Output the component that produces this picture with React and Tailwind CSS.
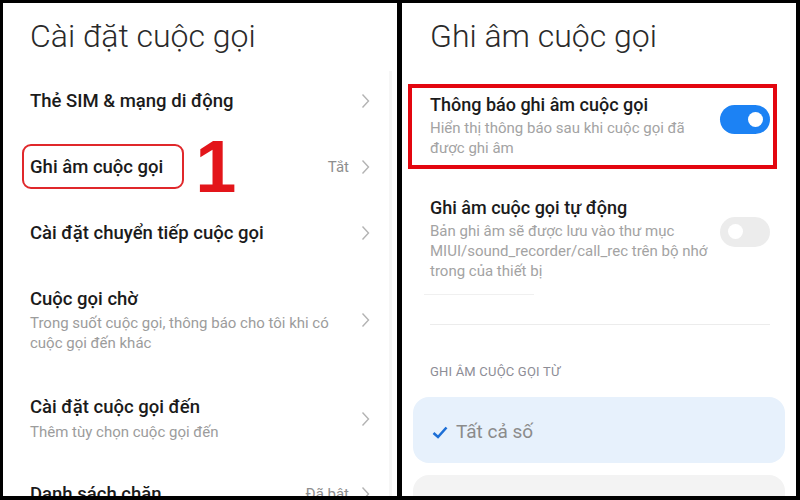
import React from "react";

const font = { fontFamily: "Roboto, 'Noto Sans', sans-serif" };

function Chevron() {
	return (
		<svg width="9" height="16" viewBox="0 0 9 16" className="shrink-0">
			<polyline points="1.5,1.5 7.5,8 1.5,14.5" fill="none" stroke="#b3b3b3" strokeWidth="1.4" />
		</svg>
	);
}

function Toggle({ on }) {
	return on ? (
		<div className="w-[50px] h-[29px] rounded-full bg-[#1c82f4] flex items-center justify-end pr-[7px] shrink-0">
			<div className="w-[15px] h-[15px] rounded-full bg-white" />
		</div>
	) : (
		<div className="w-[50px] h-[30px] rounded-full bg-[#ececec] flex items-center pl-[8px] shrink-0">
			<div className="w-[15px] h-[15px] rounded-full bg-white" />
		</div>
	);
}

function LeftPanel() {
	return (
		<div className="w-[394px] h-full bg-white overflow-hidden relative flex">
			<div className="flex-1 flex flex-col pl-[27px] pr-[19px]">
				<div className="h-[65px] pt-[13px] shrink-0">
					<h1 className="text-[32px] leading-[40px] font-light text-[#2a2a2a]">Cài đặt cuộc gọi</h1>
				</div>
				<div className="h-[66px] shrink-0 flex items-center justify-between">
					<p className="text-[18.5px] leading-[24px] font-medium text-[#1b1b1b]">Thẻ SIM &amp; mạng di động</p>
					<Chevron />
				</div>
				<div className="h-[66px] shrink-0 flex items-center justify-between">
					<div className="flex items-center">
						<span className="relative text-[18.5px] leading-[24px] font-medium text-[#1b1b1b]">
							Ghi âm cuộc gọi
							<span className="absolute -left-[8px] -right-[21px] -top-[11px] -bottom-[10px] border-[2.5px] border-[#e0282b] rounded-[9px]" />
						</span>
						<span className="ml-[32px] text-[74px] leading-none font-bold text-[#e3151a]" style={{ fontFamily: "'Liberation Sans', Arial, sans-serif" }}>1</span>
					</div>
					<div className="flex items-center gap-[12px]">
						<span className="text-[15px] text-[#8e8e8e]">Tắt</span>
						<Chevron />
					</div>
				</div>
				<div className="h-[66px] shrink-0 flex items-center justify-between">
					<p className="text-[18.5px] leading-[24px] font-medium text-[#1b1b1b]">Cài đặt chuyển tiếp cuộc gọi</p>
					<Chevron />
				</div>
				<div className="pt-[21px] pb-[18px] shrink-0 flex items-center justify-between">
					<div>
						<p className="text-[18.5px] leading-[24px] font-medium text-[#1b1b1b]">Cuộc gọi chờ</p>
						<p className="text-[15px] leading-[20px] text-[#9c9c9c] mt-[2px]">Trong suốt cuộc gọi, thông báo cho tôi khi có<br />cuộc gọi đến khác</p>
					</div>
					<Chevron />
				</div>
				<div className="pt-[24px] pb-[22px] shrink-0 flex items-center justify-between">
					<div>
						<p className="text-[18.5px] leading-[24px] font-medium text-[#1b1b1b]">Cài đặt cuộc gọi đến</p>
						<p className="text-[15px] leading-[22px] text-[#9c9c9c] mt-[2px]">Thêm tùy chọn cuộc gọi đến</p>
					</div>
					<Chevron />
				</div>
				<div className="pt-[17px] shrink-0 flex items-center justify-between">
					<p className="text-[18.5px] leading-[24px] font-medium text-[#1b1b1b]">Danh sách chặn</p>
					<div className="flex items-center gap-[12px]">
						<span className="text-[15px] text-[#8e8e8e]">Đã bật</span>
						<Chevron />
					</div>
				</div>
			</div>
			<div className="w-[3px] mt-[68px] bg-[#f6f6f6] mr-[5px]" />
		</div>
	);
}

function RightPanel() {
	return (
		<div className="w-[394px] h-full bg-white overflow-hidden relative">
			<div className="flex flex-col pl-[28px] pr-[26px]">
				<div className="h-[81px] pt-[13px]">
					<h1 className="text-[32px] leading-[40px] font-light text-[#2a2a2a]">Ghi âm cuộc gọi</h1>
				</div>
				<div className="relative pt-[9px] pb-[11px] flex items-center justify-between">
					<div>
						<p className="text-[18px] leading-[24px] font-medium text-[#1b1b1b]">Thông báo ghi âm cuộc gọi</p>
						<p className="text-[15px] leading-[20px] text-[#a3a3a3] mt-[1px]">Hiển thị thông báo sau khi cuộc gọi đã<br />được ghi âm</p>
					</div>
					<div className="mt-[-13px]"><Toggle on /></div>
					<div className="absolute -left-[22px] -right-[7px] top-0 bottom-0 border-[4px] border-[#e3060f]" />
				</div>
				<div className="pt-[27px] flex items-center justify-between">
					<div>
						<p className="text-[18px] leading-[24px] font-medium text-[#1b1b1b]">Ghi âm cuộc gọi tự động</p>
						<p className="text-[15px] leading-[20px] text-[#a3a3a3] mt-[1px]">Bản ghi âm sẽ được lưu vào thư mục<br />MIUI/sound_recorder/call_rec trên bộ nhớ<br />trong của thiết bị</p>
					</div>
					<div className="mt-[-14px]"><Toggle /></div>
				</div>
				<div className="h-px w-[110px] bg-[#f0f0f0] mt-[13px] -ml-[6px]" />
				<div className="h-px bg-[#ececec] mt-[29px]" />
				<p className="text-[13px] leading-[18px] text-[#8d8d96] mt-[38px] tracking-[0.2px]">GHI ÂM CUỘC GỌI TỪ</p>
			</div>
			<div className="mx-[11px] mt-[16px] h-[66px] rounded-[16px] bg-[#e7f1fc] flex items-center pl-[19px] gap-[8px] pt-[4px]">
				<svg width="16" height="13" viewBox="0 0 16 13">
					<polyline points="1.5,7 6,11 14.5,1.5" fill="none" stroke="#1d6fd6" strokeWidth="2.6" />
				</svg>
				<span className="text-[19px] text-[#8b8b8b]">Tất cả số</span>
			</div>
			<div className="mx-[11px] mt-[12px] h-[66px] rounded-[16px] bg-[#f3f3f3]" />
		</div>
	);
}

export default function App() {
	return (
		<div className="w-[800px] h-[500px] bg-black pt-[3px] pl-[3px] pr-[4px] pb-[4px] flex gap-[5px]" style={font}>
			<LeftPanel />
			<RightPanel />
		</div>
	);
}
